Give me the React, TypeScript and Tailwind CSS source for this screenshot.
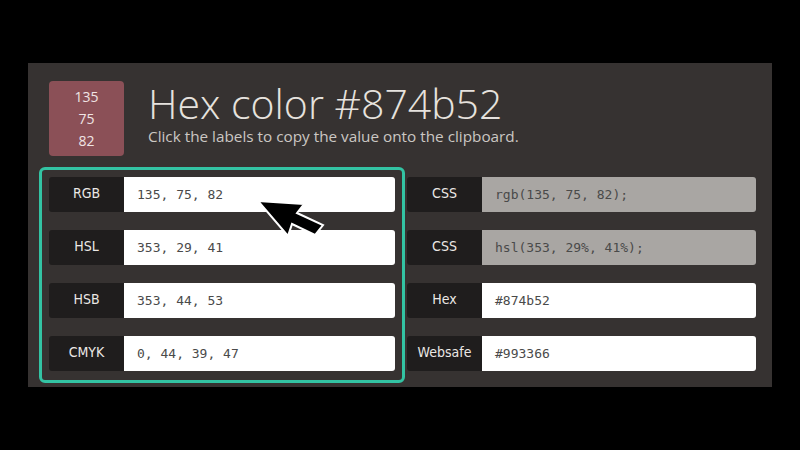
const leftRows = [
  { label: "RGB", value: "135, 75, 82" },
  { label: "HSL", value: "353, 29, 41" },
  { label: "HSB", value: "353, 44, 53" },
  { label: "CMYK", value: "0, 44, 39, 47" },
];

const rightRows = [
  { label: "CSS", value: "rgb(135, 75, 82);", readOnly: true },
  { label: "CSS", value: "hsl(353, 29%, 41%);", readOnly: true },
  { label: "Hex", value: "#874b52" },
  { label: "Websafe", value: "#993366" },
];

function Row({ label, value, readOnly }: { label: string; value: string; readOnly?: boolean }) {
  return (
    <div className="flex h-[35px]">
      <div className="w-[75px] shrink-0 rounded-l-[3px] bg-[#1f1d1d] flex items-start justify-center pt-[6px] text-[14px] text-[#ebe8e5] font-['DejaVu_Sans_Condensed','DejaVu_Sans',sans-serif]">
        {label}
      </div>
      <div
        className={`flex-1 rounded-r-[3px] flex items-center pl-[13px] text-[13px] text-[#4a4a4a] font-['DejaVu_Sans_Mono',monospace] ${
          readOnly ? "bg-[#a9a6a3]" : "bg-white"
        }`}
      >
        {value}
      </div>
    </div>
  );
}

function Cursor() {
  return (
    <svg className="absolute left-[250px] top-[193px]" width="80" height="50" viewBox="0 0 80 50">
      <path
        d="M8 8 L54 11 L47 20 L73 32 L65 42 L42 31 L38 43 Z"
        fill="#000"
        stroke="#fff"
        strokeWidth="2"
        strokeLinejoin="miter"
      />
    </svg>
  );
}

export default function App() {
  return (
    <div className="relative w-[800px] h-[450px] bg-black pt-[63px] pl-[28px] font-['Open_Sans',sans-serif]">
      <div className="w-[744px] h-[324px] bg-[#363231] pt-[18px] pl-[21px]">
        <div className="flex gap-[24px]">
          <div className="w-[75px] h-[75px] rounded-[4px] bg-[#8b5057] flex flex-col items-center justify-center text-[14px] leading-[22px] text-[#f0e4e4]">
            <span>135</span>
            <span>75</span>
            <span>82</span>
          </div>
          <div className="flex flex-col">
            <h1 className="text-[41px] leading-[46px] font-light text-[#e6e2de] -mt-[1px]">Hex color #874b52</h1>
            <p className="text-[15.3px] leading-[20px] text-[#cbc7c3]">
              Click the labels to copy the value onto the clipboard.
            </p>
          </div>
        </div>
        <div className="flex mt-[11px] -ml-[10px]">
          <div className="w-[366px] h-[216px] rounded-[6px] border-[3px] border-[#33c3a3] px-[7px] pt-[7px] flex flex-col gap-[18px]">
            {leftRows.map((r) => (
              <Row key={r.label} label={r.label} value={r.value} />
            ))}
          </div>
          <div className="w-[349px] ml-[2px] pt-[10px] flex flex-col gap-[18px]">
            {rightRows.map((r, i) => (
              <Row key={i} label={r.label} value={r.value} readOnly={r.readOnly} />
            ))}
          </div>
        </div>
      </div>
      <Cursor />
    </div>
  );
}
